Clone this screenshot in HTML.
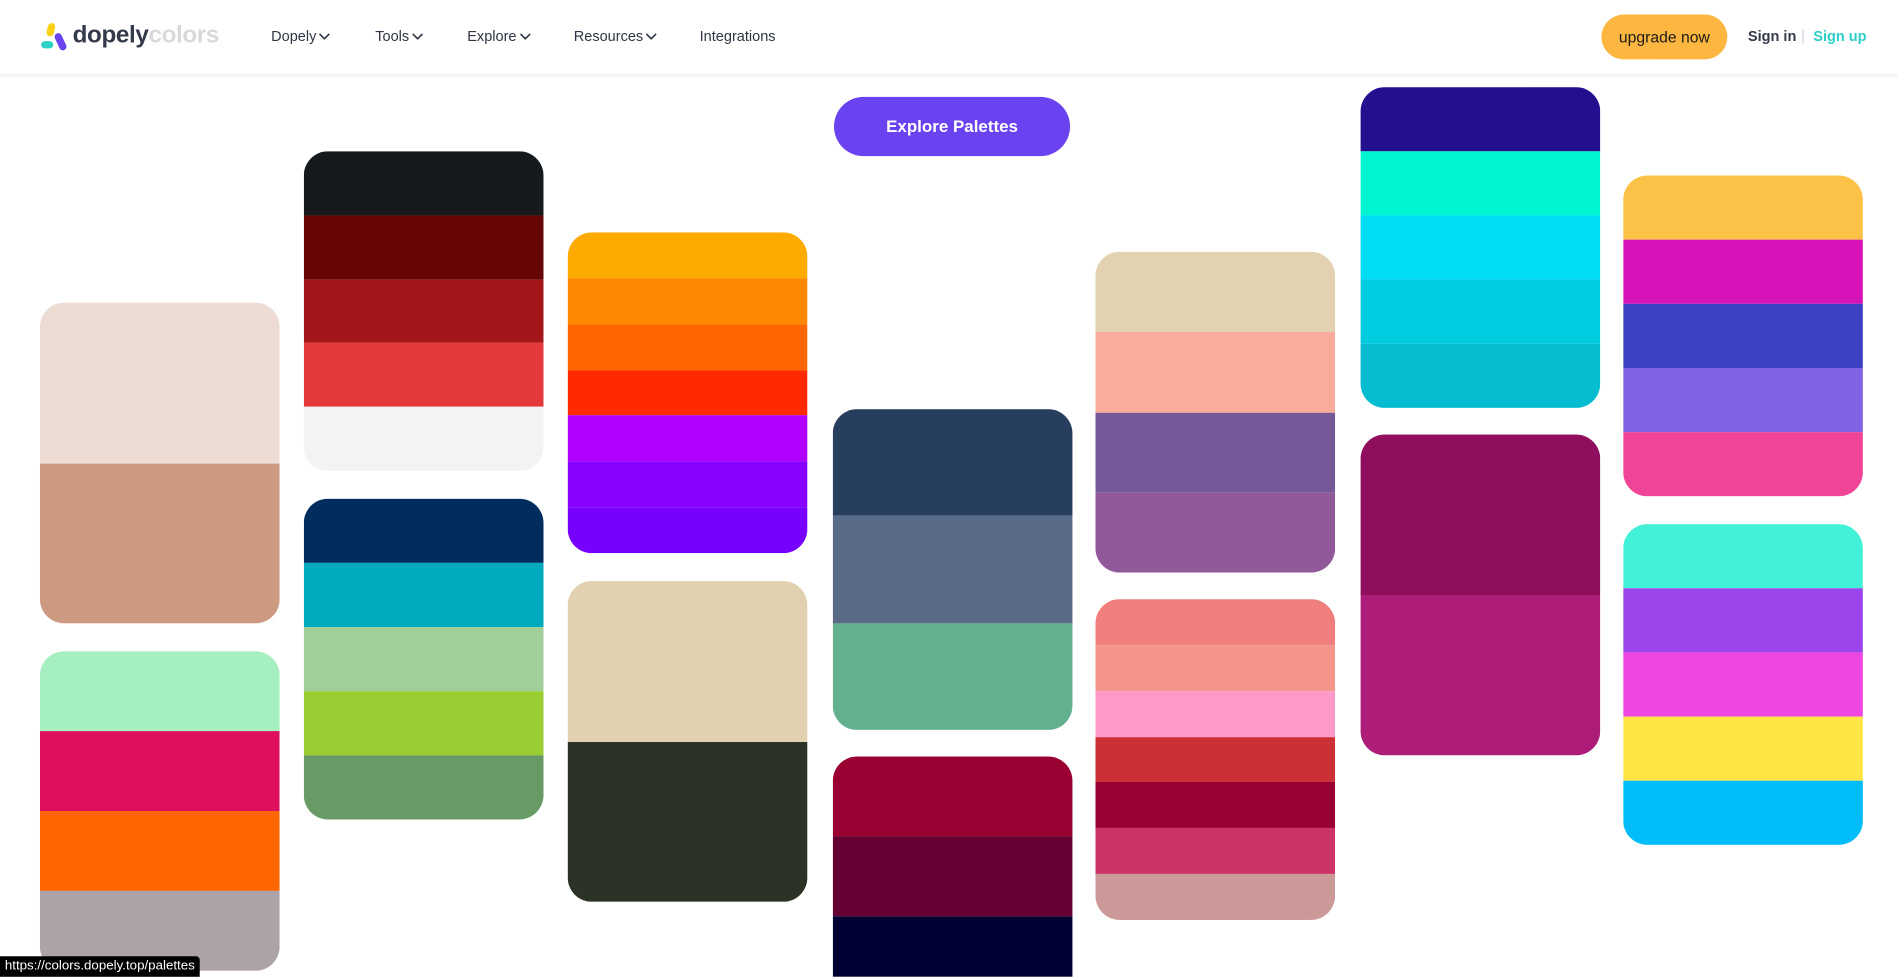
<!DOCTYPE html>
<html><head><meta charset="utf-8"><style>
*{margin:0;padding:0;box-sizing:border-box}
html,body{width:1898px;height:977px;overflow:hidden;background:#fff;font-family:"Liberation Sans",sans-serif}
#w{position:absolute;left:0;top:0;width:1568px;height:807px;overflow:hidden;transform:scale(1.21046);transform-origin:0 0}
.hd{position:absolute;left:0;top:0;width:1568px;height:62px;background:#fff;box-shadow:0 1px 3px rgba(0,0,0,.06);border-bottom:1px solid #f1f1f1}
.nav{position:absolute;top:23px;font-size:12px;color:#2f3545;font-weight:500}
.nav svg{vertical-align:middle;margin-left:2px}
.c{position:absolute;width:198px;border-radius:20px;overflow:hidden;display:flex;flex-direction:column}
.c div{flex:1}
</style></head><body><div id="w">
<div class="hd">
 <div style="position:absolute;left:34px;top:19px;width:22px;height:24px">
  <div style="position:absolute;left:5px;top:0;width:6px;height:11px;background:#fcd116;border-radius:3px;transform:rotate(15deg)"></div>
  <div style="position:absolute;left:0;top:15px;width:10px;height:6px;background:#2dd1c6;border-radius:3px"></div>
  <div style="position:absolute;left:13px;top:8px;width:6px;height:15px;background:#6a44f0;border-radius:3px;transform:rotate(-25deg)"></div>
 </div>
 <div style="position:absolute;left:60px;top:18px;font-size:20px;font-weight:bold;letter-spacing:-0.3px"><span style="color:#343a4b">dopely</span><span style="color:#d9d9d9">colors</span></div>
 <div class="nav" style="left:224px">Dopely<svg width="10" height="7"><path d="M1 1l4 4 4-4" stroke="#2f3545" fill="none" stroke-width="1.3"/></svg></div>
 <div class="nav" style="left:310px">Tools<svg width="10" height="7"><path d="M1 1l4 4 4-4" stroke="#2f3545" fill="none" stroke-width="1.3"/></svg></div>
 <div class="nav" style="left:386px">Explore<svg width="10" height="7"><path d="M1 1l4 4 4-4" stroke="#2f3545" fill="none" stroke-width="1.3"/></svg></div>
 <div class="nav" style="left:474px">Resources<svg width="10" height="7"><path d="M1 1l4 4 4-4" stroke="#2f3545" fill="none" stroke-width="1.3"/></svg></div>
 <div class="nav" style="left:578px">Integrations</div>
 <div style="position:absolute;left:1323px;top:12px;width:104px;height:37px;border-radius:19px;background:#fdb740;color:#1b1b1b;font-size:13px;text-align:center;line-height:37px">upgrade now</div>
 <div style="position:absolute;left:1444px;top:23px;font-size:12px;color:#343a4b;font-weight:bold">Sign in</div>
 <div style="position:absolute;left:1489px;top:24px;width:1px;height:12px;background:#c8cfe0"></div>
 <div style="position:absolute;left:1498px;top:23px;font-size:12px;color:#2dcfc9;font-weight:bold">Sign up</div>
</div>
<div style="position:absolute;left:689px;top:80px;width:195px;height:49px;border-radius:25px;background:#6a42ef;color:#fff;font-weight:bold;font-size:14px;text-align:center;line-height:49px">Explore Palettes</div>

<div class="c" style="left:33px;top:250px;height:265px"><div style="background:#eddcd3"></div><div style="background:#cb9a80"></div></div>
<div class="c" style="left:33px;top:538px;height:264px"><div style="background:#a6efc0"></div><div style="background:#de0f5e"></div><div style="background:#fc6500"></div><div style="background:#aba3a8"></div></div>

<div class="c" style="left:251px;top:125px;height:264px"><div style="background:#171a1d"></div><div style="background:#660606"></div><div style="background:#a5161a"></div><div style="background:#e5383b"></div><div style="background:#f4f2f3"></div></div>
<div class="c" style="left:251px;top:412px;height:265px"><div style="background:#002d5e"></div><div style="background:#00abbf"></div><div style="background:#a1cf9a"></div><div style="background:#9acd32"></div><div style="background:#679a64"></div></div>

<div class="c" style="left:469px;top:192px;height:265px"><div style="background:#ffaa00"></div><div style="background:#ff8800"></div><div style="background:#ff6600"></div><div style="background:#ff2a00"></div><div style="background:#b000ff"></div><div style="background:#8800ff"></div><div style="background:#7700ff"></div></div>
<div class="c" style="left:469px;top:480px;height:265px"><div style="background:#e1d1b0"></div><div style="background:#2b3326"></div></div>

<div class="c" style="left:688px;top:338px;height:265px"><div style="background:#283e5e"></div><div style="background:#5a6b87"></div><div style="background:#62b08e"></div></div>
<div style="position:absolute;left:688px;top:625px;width:198px;height:182px;border-radius:20px 20px 0 0;overflow:hidden">
 <div style="height:66px;background:#9b0033"></div><div style="height:66px;background:#650033"></div><div style="height:50px;background:#000033"></div>
</div>

<div class="c" style="left:905px;top:208px;height:265px"><div style="background:#e2d2b1"></div><div style="background:#f9ab9c"></div><div style="background:#745898"></div><div style="background:#91589a"></div></div>
<div class="c" style="left:905px;top:495px;height:265px"><div style="background:#ef7e7c"></div><div style="background:#f4958a"></div><div style="background:#ff99c8"></div><div style="background:#cb3035"></div><div style="background:#9b0033"></div><div style="background:#cc3465"></div><div style="background:#cc9999"></div></div>

<div class="c" style="left:1124px;top:72px;height:265px"><div style="background:#22108f"></div><div style="background:#01f5d2"></div><div style="background:#00dcf3"></div><div style="background:#00cce0"></div><div style="background:#06bcd0"></div></div>
<div class="c" style="left:1124px;top:359px;height:265px"><div style="background:#8f0e5d"></div><div style="background:#ae1c7a"></div></div>

<div class="c" style="left:1341px;top:145px;height:265px"><div style="background:#fbc247"></div><div style="background:#d513b8"></div><div style="background:#3d40c1"></div><div style="background:#8163e5"></div><div style="background:#f04596"></div></div>
<div class="c" style="left:1341px;top:433px;height:265px"><div style="background:#42f1d7"></div><div style="background:#9a46ec"></div><div style="background:#f046e1"></div><div style="background:#ffe445"></div><div style="background:#00bcf9"></div></div>

<div style="position:absolute;left:0;top:790px;height:17px;padding:0 4px;background:#000;color:#fff;font-size:11px;line-height:17px;border-radius:0 3px 0 0">https://colors.dopely.top/palettes</div>
</div></body></html>
